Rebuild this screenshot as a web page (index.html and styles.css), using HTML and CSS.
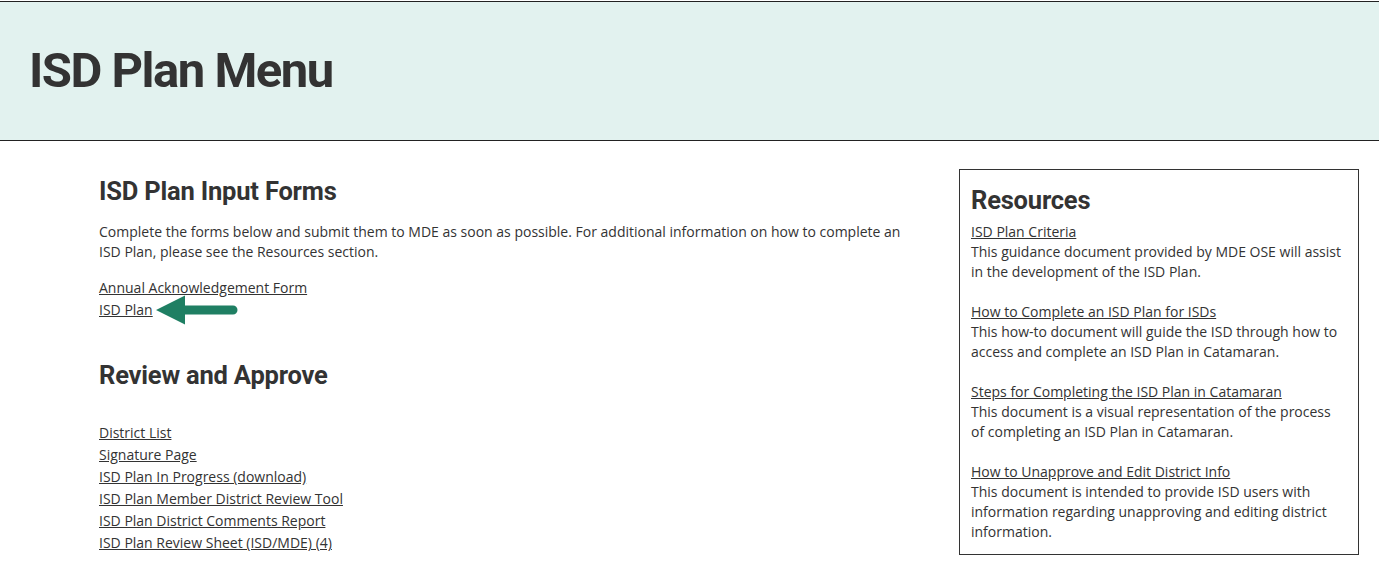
FILE: index.html
```html
<!DOCTYPE html>
<html lang="en">
<head>
<meta charset="utf-8">
<title>ISD Plan Menu</title>
<link rel="stylesheet" href="styles.css">
</head>
<body>
<header class="banner">
  <h1 class="banner-title">ISD Plan Menu</h1>
</header>
<div class="page">
  <main class="main">
    <h2 class="section-title">ISD Plan Input Forms</h2>
    <p class="intro">Complete the forms below and submit them to MDE as soon as possible. For additional information on how to complete an ISD Plan, please see the Resources section.</p>
    <ul class="link-list">
      <li><a href="#">Annual Acknowledgement Form</a></li>
      <li class="with-arrow"><a href="#">ISD Plan</a><svg class="arrow" width="84" height="32" viewBox="0 0 84 32"><path d="M1 16 L30 1.5 L30 11.5 L78 11.5 A4.5 4.5 0 0 1 78 20.5 L30 20.5 L30 30.5 Z" fill="#1f7f63"/></svg></li>
    </ul>
    <h2 class="section-title review">Review and Approve</h2>
    <ul class="link-list review-list">
      <li><a href="#">District List</a></li>
      <li><a href="#">Signature Page</a></li>
      <li><a href="#">ISD Plan In Progress (download)</a></li>
      <li><a href="#">ISD Plan Member District Review Tool</a></li>
      <li><a href="#">ISD Plan District Comments Report</a></li>
      <li><a href="#">ISD Plan Review Sheet (ISD/MDE) (4)</a></li>
    </ul>
  </main>
  <aside class="resources">
    <h2 class="resources-title">Resources</h2>
    <div class="resource">
      <a href="#">ISD Plan Criteria</a>
      <p>This guidance document provided by MDE OSE will assist in the development of the ISD Plan.</p>
    </div>
    <div class="resource">
      <a href="#">How to Complete an ISD Plan for ISDs</a>
      <p>This how-to document will guide the ISD through how to access and complete an ISD Plan in Catamaran.</p>
    </div>
    <div class="resource">
      <a href="#">Steps for Completing the ISD Plan in Catamaran</a>
      <p>This document is a visual representation of the process of completing an ISD Plan in Catamaran.</p>
    </div>
    <div class="resource">
      <a href="#">How to Unapprove and Edit District Info</a>
      <p>This document is intended to provide ISD users with information regarding unapproving and editing district information.</p>
    </div>
  </aside>
</div>
</body>
</html>
```

FILE: styles.css
```css
html, body {
  margin: 0;
  padding: 0;
  background: #ffffff;
}
body {
  font-family: "Open Sans", "Liberation Sans", sans-serif;
  font-size: 14px;
  line-height: 20px;
  color: #333333;
}
.banner {
  margin-top: 1px;
  border-top: 1px solid #222;
  border-bottom: 1px solid #222;
  background: #e2f2ef;
  height: 138px;
  display: flex;
  align-items: center;
  padding-left: 29px;
}
.banner-title {
  margin: 0;
  font-family: Roboto, "Liberation Sans", sans-serif;
  font-weight: 700;
  font-size: 49px;
  line-height: 60px;
  color: #333;
  letter-spacing: -1.5px;
}
.page {
  display: flex;
  align-items: flex-start;
  padding-left: 99px;
  padding-top: 28px;
}
.main {
  width: 812px;
  padding-top: 4px;
}
.section-title {
  margin: 0;
  font-family: Roboto, "Liberation Sans", sans-serif;
  font-weight: 700;
  font-size: 25.5px;
  line-height: 36px;
  color: #333;
  letter-spacing: -0.2px;
}
.intro {
  margin: 13px 0 0 0;
}
.link-list {
  list-style: none;
  margin: 15px 0 0 0;
  padding: 0;
}
.link-list li {
  line-height: 22px;
}
.with-arrow {
  position: relative;
}
a {
  color: #333;
  text-decoration: underline;
}
.arrow {
  position: absolute;
  left: 56px;
  top: -5px;
}
.section-title.review {
  margin-top: 36px;
}
.review-list {
  margin-top: 29px;
}
.resources {
  margin-left: 48px;
  width: 373px;
  border: 1px solid #333;
  padding: 12px 14px 12px 11px;
}
.resources-title {
  margin: 0 0 4px 0;
  font-family: Roboto, "Liberation Sans", sans-serif;
  font-weight: 700;
  font-size: 25.5px;
  line-height: 36px;
  color: #333;
  letter-spacing: -0.2px;
}
.resource {
  margin-bottom: 20px;
}
.resource:last-child {
  margin-bottom: 0;
}
.resource p {
  margin: 0;
}
```
